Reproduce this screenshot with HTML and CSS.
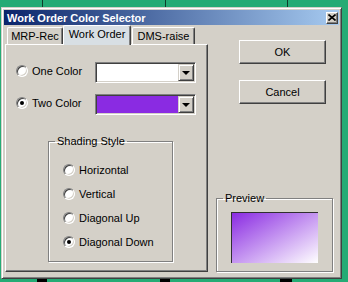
FILE: index.html
```html
<!DOCTYPE html>
<html lang="en">
<head>
    <meta charset="UTF-8">
    <title>Work Order Color Selector</title>
    <link rel="stylesheet" href="styles.css">
</head>
<body>

    <div class="dialog">
        <!-- Title bar -->
        <div class="titlebar">
            <span class="title">Work Order Color Selector</span>
            <span class="close-btn">
                <svg width="8" height="7" viewBox="0 0 8 7">
                    <path d="M0.5 0.5 L7.5 6.5 M7.5 0.5 L0.5 6.5" stroke="#000" stroke-width="1.6"/>
                </svg>
            </span>
        </div>

        <div class="dialog-body">
            <!-- Tabs -->
            <div class="tab-control">
                <div class="tabs">
                    <div class="tab tab-mrp">MRP-Rec</div>
                    <div class="tab tab-work active">Work Order</div>
                    <div class="tab tab-dms">DMS-raise</div>
                </div>

                <div class="tab-panel">
                    <div class="color-row">
                        <div class="option"><span class="radio"></span>One Color</div>
                        <div class="combo">
                            <span class="combo-value"></span>
                            <span class="combo-btn"></span>
                        </div>
                    </div>

                    <div class="color-row">
                        <div class="option"><span class="radio checked"></span>Two Color</div>
                        <div class="combo">
                            <span class="combo-value purple"></span>
                            <span class="combo-btn"></span>
                        </div>
                    </div>

                    <fieldset class="group shading">
                        <legend>Shading Style</legend>
                        <div class="option"><span class="radio"></span>Horizontal</div>
                        <div class="option"><span class="radio"></span>Vertical</div>
                        <div class="option"><span class="radio"></span>Diagonal Up</div>
                        <div class="option"><span class="radio checked"></span>Diagonal Down</div>
                    </fieldset>
                </div>
            </div>

            <!-- Buttons and preview -->
            <div class="side">
                <button class="btn btn-ok">OK</button>
                <button class="btn btn-cancel">Cancel</button>

                <fieldset class="group preview">
                    <legend>Preview</legend>
                    <div class="preview-box"></div>
                </fieldset>
            </div>
        </div>
    </div>

    <div class="sheet-bottom"></div>

</body>
</html>
```

FILE: styles.css
```css
/* General Reset */
* {
    margin: 0;
    padding: 0;
    box-sizing: border-box;
}

/* Spreadsheet behind the dialog */
body {
    width: 348px;
    height: 282px;
    overflow: hidden;
    padding-top: 7px;
    font-family: 'Liberation Sans', Arial, sans-serif;
    font-size: 11px;
    color: #000;
    background: linear-gradient(90deg,
        #25ab75 0 42px, #0e3d2a 42px 43px,
        #25ab75 43px 165px, #0e3d2a 165px 166px,
        #25ab75 166px 287px, #0e3d2a 287px 288px,
        #25ab75 288px);
}

.sheet-bottom {
    height: 3px;
    background: linear-gradient(90deg,
        transparent 0 37px, #000 37px 47px,
        transparent 47px 160px, #000 160px 170px,
        transparent 170px 280px, #000 280px 292px,
        transparent 292px);
}

/* Dialog window */
.dialog {
    margin-left: 1px;
    width: 341px;
    height: 272px;
    background-color: #d4d0c8;
    border: 1px solid;
    border-color: #d4d0c8 #404040 #404040 #d4d0c8;
    box-shadow: inset 1px 1px 0 #fff, inset -1px -1px 0 #808080;
    padding: 2px;
}

.titlebar {
    height: 15px;
    display: flex;
    align-items: center;
    justify-content: space-between;
    padding: 0 1px 0 3px;
    background: linear-gradient(90deg, #0a246a, #a6caf0);
}

.title {
    color: #fff;
    font-weight: bold;
    font-size: 11px;
}

.close-btn {
    width: 12px;
    height: 12px;
    display: flex;
    align-items: center;
    justify-content: center;
    background-color: #d4d0c8;
    border: 1px solid;
    border-color: #fff #404040 #404040 #fff;
    box-shadow: inset -1px -1px 0 #808080;
}

.dialog-body {
    height: 251px;
    display: flex;
    gap: 8px;
    padding: 0 6px 4px 1px;
}

/* Tab control */
.tab-control {
    width: 203px;
    display: flex;
    flex-direction: column;
}

.tabs {
    height: 19px;
    display: flex;
    align-items: flex-end;
    padding-left: 2px;
}

.tab {
    height: 17px;
    display: flex;
    align-items: center;
    justify-content: center;
    background-color: #d4d0c8;
    border: 1px solid;
    border-bottom: none;
    border-color: #fff #404040 #404040 #fff;
    border-radius: 2px 2px 0 0;
    box-shadow: inset -1px 0 0 #808080;
    padding-bottom: 1px;
}

.tab-mrp {
    width: 56px;
}

.tab-work {
    width: 68px;
}

.tab-dms {
    width: 63px;
    margin-left: 1px;
}

.tab.active {
    height: 20px;
    margin-bottom: -1px;
    position: relative;
    z-index: 1;
    background-color: #d8dfe4;
    padding-bottom: 4px;
}

.tab-panel {
    flex: 1;
    border: 1px solid;
    border-color: #fff #404040 #404040 #fff;
    box-shadow: inset -1px -1px 0 #808080;
    padding: 17px 0 0 10px;
}

/* Radio options */
.option {
    display: flex;
    align-items: center;
    gap: 4px;
    white-space: nowrap;
}

.radio {
    width: 12px;
    height: 12px;
    flex-shrink: 0;
    display: flex;
    align-items: center;
    justify-content: center;
    background-color: #fff;
    border: 1px solid;
    border-color: #808080 #fff #fff #808080;
    border-radius: 50%;
    box-shadow: inset 1px 1px 0 #404040, inset -1px -1px 0 #d4d0c8;
}

.radio.checked::after {
    content: "";
    width: 4px;
    height: 4px;
    border-radius: 50%;
    background-color: #000;
}

/* Colour rows */
.color-row {
    height: 21px;
    display: flex;
    align-items: center;
}

.color-row + .color-row {
    margin-top: 11px;
}

.color-row .option {
    width: 79px;
    margin-bottom: 3px;
}

.combo {
    width: 101px;
    height: 21px;
    display: flex;
    border: 1px solid;
    border-color: #808080 #fff #fff #808080;
    box-shadow: inset 1px 1px 0 #404040, inset -1px -1px 0 #d4d0c8;
    background-color: #fff;
    padding: 1px;
}

.combo-value {
    flex: 1;
}

.combo-value.purple {
    background-color: #8a2be2;
}

.combo-btn {
    width: 16px;
    display: flex;
    align-items: center;
    justify-content: center;
    background-color: #d4d0c8;
    border: 1px solid;
    border-color: #d4d0c8 #404040 #404040 #d4d0c8;
    box-shadow: inset 1px 1px 0 #fff, inset -1px -1px 0 #808080;
}

.combo-btn::after {
    content: "";
    border-left: 4px solid transparent;
    border-right: 4px solid transparent;
    border-top: 4px solid #000;
    margin-top: 1px;
}

/* Group boxes */
.group {
    min-inline-size: 0;
    border: 1px solid #808080;
    box-shadow: inset 1px 1px 0 #fff, 1px 1px 0 #fff;
}

.group legend {
    padding: 0 2px;
    line-height: 13px;
    margin-left: -8px;
}

.shading {
    width: 125px;
    margin: 20px 0 0 32px;
    padding: 10px 0 7px 14px;
}

.shading .option {
    height: 24px;
}

/* Side column */
.side {
    width: 117px;
    display: flex;
    flex-direction: column;
}

.btn {
    width: 87px;
    height: 24px;
    margin-left: 23px;
    font-family: inherit;
    font-size: 11px;
    color: #000;
    background-color: #d4d0c8;
    border: 1px solid;
    border-color: #fff #404040 #404040 #fff;
    box-shadow: inset -1px -1px 0 #808080;
}

.btn-ok {
    margin-top: 15px;
}

.btn-cancel {
    margin-top: 16px;
}

.preview {
    margin-top: auto;
    padding: 7px 0 8px 14px;
}

.preview-box {
    width: 87px;
    height: 51px;
    border-top: 1px solid #303030;
    border-left: 1px solid #303030;
    background: linear-gradient(to bottom right, #8a2be2, #fff);
}
```
